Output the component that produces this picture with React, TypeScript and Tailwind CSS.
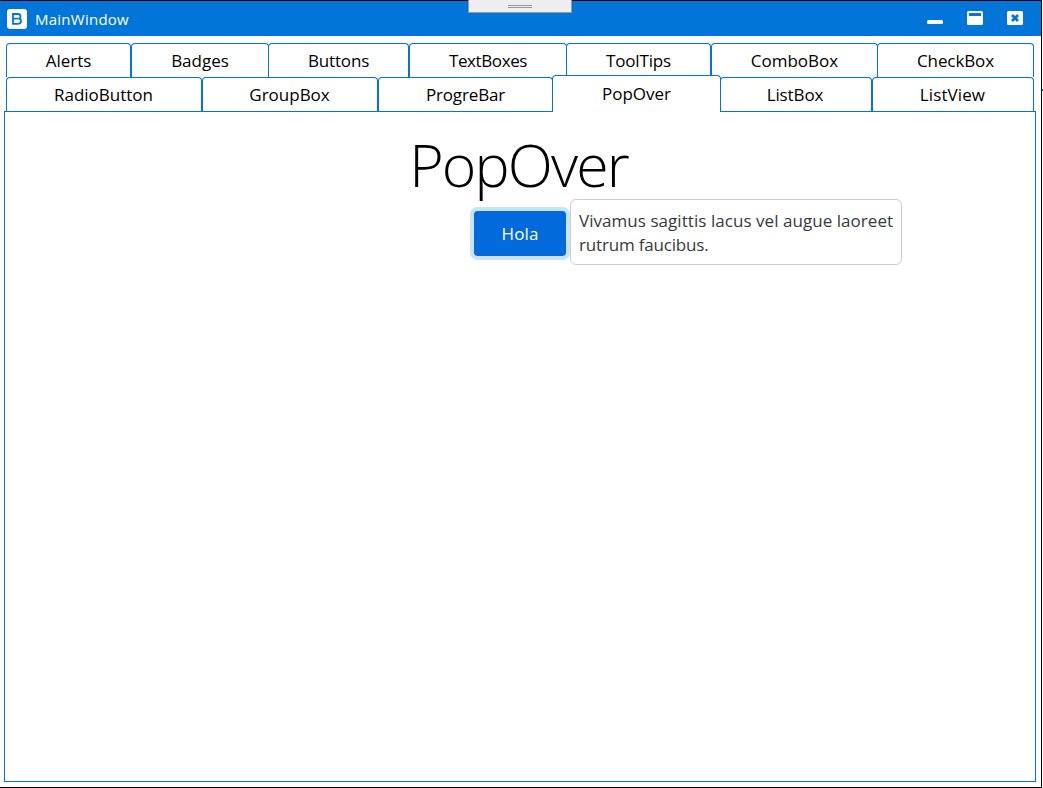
import type { ReactNode } from "react";

type Tab = { label: string; box: string; text?: string };

const firstRow: Tab[] = [
  { label: "Alerts", box: "w-[125px]" },
  { label: "Badges", box: "w-[138px]" },
  { label: "Buttons", box: "w-[141px] -ml-px", text: "tracking-[-0.15px]" },
  { label: "TextBoxes", box: "w-[158px]", text: "tracking-[-0.4px]" },
  { label: "ToolTips", box: "w-[145px] -ml-px", text: "tracking-[-0.15px]" },
  { label: "ComboBox", box: "w-[167px]" },
  { label: "CheckBox", box: "w-[157px] -ml-px", text: "tracking-[-0.1px]" },
];

const secondRow: Tab[] = [
  { label: "RadioButton", box: "w-[196px] pr-px" },
  { label: "GroupBox", box: "w-[176px] pr-px" },
  { label: "ProgreBar", box: "w-[175px]", text: "tracking-[-0.15px]" },
  { label: "PopOver", box: "w-[169px] -ml-px pt-px" },
  { label: "ListBox", box: "w-[152px] -ml-px pr-[2px]", text: "tracking-[-0.1px]" },
  { label: "ListView", box: "w-[162px] pr-px", text: "tracking-[0.1px]" },
];

function TabItem({ tab, active }: { tab: Tab; active?: boolean }) {
  return (
    <div
      className={`flex shrink-0 justify-center rounded-t-[4px] border border-b-0 border-[#0275d8] bg-white text-[17px] leading-[34px] ${
        active ? "z-10 -mt-[2px] h-[37px]" : "h-[34px]"
      } ${tab.box}`}
    >
      <span className={tab.text}>{tab.label}</span>
    </div>
  );
}

function IconButton({ children, label }: { children: ReactNode; label: string }) {
  return (
    <button aria-label={label} className="block h-4 w-4">
      {children}
    </button>
  );
}

export default function App() {
  return (
    <div className="flex h-[788px] w-[1043px] overflow-hidden bg-white font-['Open_Sans','Noto_Sans',sans-serif] text-black">
      <div className="flex h-[788px] w-[1042px] shrink-0 flex-col border-y border-r border-black">
        <header className="relative flex h-[35px] shrink-0 items-center bg-[#0275d8] pl-[7px] pr-[18px] text-white">
          <svg width="20" height="20" viewBox="0 0 20 20" className="mt-px">
            <rect width="20" height="20" rx="3" fill="#fff" />
            <path
              d="M6 5h4.6c1.9 0 2.9.9 2.9 2.3 0 1.1-.6 1.9-1.7 2.2 1.4.2 2.2 1.2 2.2 2.5 0 1.9-1.3 2.9-3.3 2.9H6z"
              fill="none"
              stroke="#0275d8"
              strokeWidth="1.8"
            />
            <path d="M6 9.6h5.5" stroke="#0275d8" strokeWidth="1.7" />
          </svg>
          <span className="ml-2 text-[15px] leading-5 tracking-[0.25px]">MainWindow</span>
          <div className="-mt-px ml-auto flex gap-6">
            <IconButton label="Minimize">
              <svg width="16" height="16">
                <rect y="10" width="16" height="4" rx="1.5" fill="#fff" />
              </svg>
            </IconButton>
            <IconButton label="Maximize">
              <svg width="16" height="16">
                <rect y="1" width="16" height="14" rx="1.5" fill="#fff" />
                <rect x="2" y="3" width="12" height="3" fill="#0275d8" />
              </svg>
            </IconButton>
            <IconButton label="Close">
              <svg width="16" height="16">
                <rect y="1" width="16" height="14" rx="1.5" fill="#fff" />
                <path d="M5 5l6 6M11 5l-6 6" stroke="#0275d8" strokeWidth="2.8" />
              </svg>
            </IconButton>
          </div>
          <div className="absolute -top-px left-[468px] flex h-[13px] w-[104px] flex-col items-center border border-t-0 border-[#999999] bg-[#eeeef2] pt-[5px]">
            <div className="h-[3px] w-6 border-y border-[#999999]" />
          </div>
        </header>

        <nav className="flex flex-col pl-[6px] pt-[7px]">
          <div className="flex h-[34px]">
            {firstRow.map((t) => (
              <TabItem key={t.label} tab={t} />
            ))}
          </div>
          <div className="flex h-[34px]">
            {secondRow.map((t) => (
              <TabItem key={t.label} tab={t} active={t.label === "PopOver"} />
            ))}
          </div>
        </nav>

        <main className="ml-1 flex h-[671px] w-[1032px] shrink-0 flex-col border border-[#0275d8]">
          <h1 className="mt-[12px] pr-[3px] text-center text-[59px] font-light leading-[80px] tracking-[-1.9px]">PopOver</h1>
          <div className="-mt-[5px] flex items-start pl-[465px]">
            <button className="mt-[8px] h-[53px] w-[100px] shrink-0 rounded-[7px] border-4 border-[#c9e3fa] bg-[#026adb] bg-clip-padding text-[17px] tracking-[0.1px] text-white">
              Hola
            </button>
            <div className="h-[66px] w-[332px] rounded-[6px] border border-[#cccccc] px-2 pt-[9px] text-[17px] leading-6 text-[#373a3c]">
              <p className="whitespace-nowrap tracking-[0.05px]">Vivamus sagittis lacus vel augue laoreet</p>
              <p className="whitespace-nowrap tracking-[-0.18px]">rutrum faucibus.</p>
            </div>
          </div>
        </main>
      </div>
      <div className="mt-[89px] h-[2px] w-px bg-[#0275d8]" />
    </div>
  );
}
